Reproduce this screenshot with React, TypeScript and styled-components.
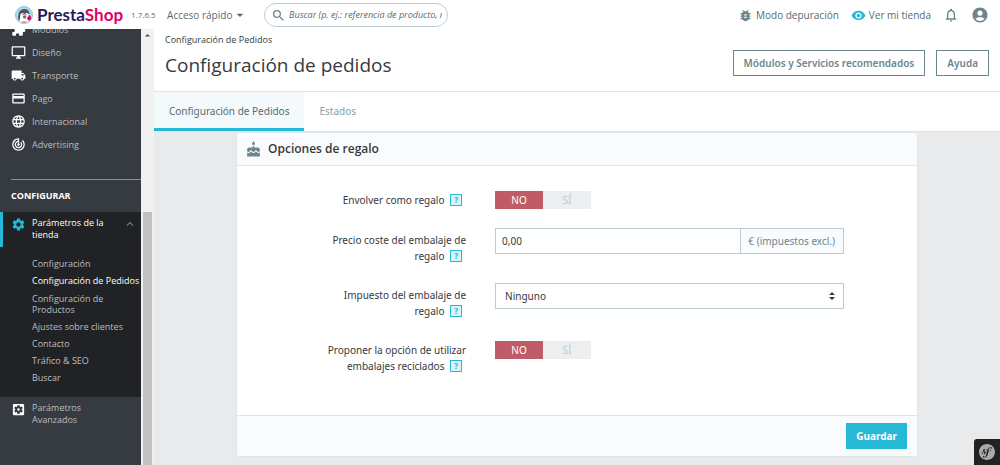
import React from "react";
import styled, { createGlobalStyle, css } from "styled-components";
import {
  MdAccountCircle,
  MdArrowDropDown,
  MdArrowDropUp,
  MdBugReport,
  MdCake,
  MdCreditCard,
  MdExtension,
  MdKeyboardArrowUp,
  MdLanguage,
  MdLocalShipping,
  MdNotificationsNone,
  MdOutlineDesktopWindows,
  MdSearch,
  MdSettings,
  MdSettingsApplications,
  MdTrackChanges,
  MdVisibility,
} from "react-icons/md";
import { SiSymfony } from "react-icons/si";

const cyan = "#25b9d7";
const slate = "#6c868e";
const ink = "#363a41";

const GlobalStyle = createGlobalStyle`
  *, *::before, *::after { box-sizing: border-box; }
  body {
    margin: 0;
    background: #e9eaec;
    color: ${ink};
    font-family: "Noto Sans", "Open Sans", sans-serif;
    font-size: 10px;
    line-height: 16px;
  }
  button, input, select { font: inherit; color: inherit; }
  a { color: inherit; text-decoration: none; }
  ul { list-style: none; margin: 0; padding: 0; }
  svg { flex: none; display: block; }
`;

const Shell = styled.div`
  display: flex;
  flex-direction: column;
  min-height: 100vh;
`;

const TopBar = styled.header`
  display: flex;
  align-items: center;
  height: 29px;
  padding: 1px 11px 0 14px;
  background: #fff;
  color: #576c72;
  font-family: "Open Sans", sans-serif;
  position: relative;
  z-index: 1;
`;

const Brand = styled.a`
  display: flex;
  align-items: center;
  gap: 3px;
  color: #251b5b;
  font-family: Lato, "Open Sans", sans-serif;
  font-size: 17px;
  font-weight: 700;
  line-height: 24px;

  em {
    color: #df0067;
    font-style: normal;
  }
`;

const Version = styled.span`
  width: 36px;
  margin-left: 8px;
  font-size: 8px;
`;

const QuickAccess = styled.button`
  display: flex;
  align-items: center;
  min-width: 97px;
  padding: 0;
  border: 0;
  background: none;
`;

const SearchBox = styled.label`
  display: flex;
  align-items: center;
  gap: 3px;
  width: 184px;
  height: 24px;
  padding: 0 5px 0 6px;
  border: 1px solid #bbcdd2;
  border-radius: 12px;

  input {
    flex: 1;
    min-width: 0;
    padding: 0;
    border: 0;
    outline: 0;
    background: none;
    font-size: 9px;
    font-style: italic;
  }
  input::placeholder { color: #576c72; opacity: 1; }
`;

const TopLinks = styled.nav`
  display: flex;
  align-items: center;
  gap: 12px;
  margin-left: auto;
`;

const TopLink = styled.a`
  display: flex;
  align-items: center;
  gap: 3px;
`;

const IconButton = styled.button`
  display: flex;
  padding: 0;
  border: 0;
  background: none;
  color: ${slate};
`;

const Columns = styled.div`
  display: flex;
  flex: 1;
`;

const Sidebar = styled.aside`
  display: flex;
  flex: none;
  width: 154px;
  overflow: hidden;
  background: #363a41;
  color: #bebebe;
  font-family: "Open Sans", sans-serif;
  font-size: 9px;
  line-height: 12px;
`;

const Menu = styled.nav`
  flex: 1;
  min-width: 0;
`;

const MenuGroup = styled.ul`
  margin-top: -11px;
`;

const menuRow = css`
  display: flex;
  gap: 6px;
  padding: 4px 0 4px 11px;

  svg { color: #fff; }
`;

const MenuLink = styled.a`
  ${menuRow}
  align-items: center;
`;

const MenuTitle = styled.h2`
  margin: 23px 0 0 11px;
  padding: 10px 0;
  border-top: 1px solid #8a8f98;
  color: #fff;
  font-size: 9px;
  font-weight: 700;
  line-height: 12px;
`;

const OpenSection = styled.div`
  background: #202226;
  padding-bottom: 14px;
`;

const OpenLink = styled.a`
  ${menuRow}
  padding: 5px 4px 6px 8px;
  border-left: 3px solid ${cyan};
  color: #fff;

  span { flex: 1; }
  svg:first-child { color: ${cyan}; }
  svg:last-child { color: ${slate}; }
`;

const SubMenu = styled.ul`
  display: flex;
  flex-direction: column;
  gap: 6px;
  padding: 11px 0 0 32px;
`;

const SubLink = styled.a<{ $active?: boolean }>`
  display: block;
  max-width: ${(p) => (p.$active ? "none" : "96px")};
  color: ${(p) => (p.$active ? "#fff" : "inherit")};
  line-height: ${(p) => (p.$active ? "12px" : "11px")};
  white-space: ${(p) => (p.$active ? "nowrap" : "normal")};
`;

const AdvancedLink = styled.a`
  ${menuRow}
  padding: 5px 48px 5px 11px;
`;

const ScrollTrack = styled.div`
  display: flex;
  flex-direction: column;
  align-items: center;
  justify-content: space-between;
  width: 13px;
  background: #f1f1f1;
  color: #505050;
`;

const ScrollThumb = styled.div`
  width: 9px;
  height: 58%;
  background: #c1c1c1;
`;

const Main = styled.main`
  flex: 1;
  min-width: 0;
`;

const PageHead = styled.div`
  background: #fff;
  border-bottom: 1px solid #dfe3e6;
`;

const TitleBlock = styled.div`
  display: flex;
  justify-content: space-between;
  align-items: flex-end;
  padding: 4px 11px 15px;
  border-bottom: 1px solid #e3e6e8;
`;

const Breadcrumb = styled.a`
  display: block;
  font-family: "Open Sans", sans-serif;
  font-size: 9px;
  line-height: 14px;
`;

const Title = styled.h1`
  margin: 7px 0 0;
  font-family: "Open Sans", sans-serif;
  font-size: 19px;
  font-weight: 400;
  line-height: 22px;
`;

const Actions = styled.div`
  display: flex;
  gap: 11px;
`;

const OutlineButton = styled.button`
  height: 26px;
  padding: 0 10px;
  border: 1px solid ${slate};
  background: #fff;
  color: ${slate};
  font-weight: 600;
`;

const Tabs = styled.nav`
  display: flex;
`;

const Tab = styled.a<{ $active?: boolean }>`
  height: 39px;
  padding: 11px 15px 0;
  border-bottom: 3px solid ${(p) => (p.$active ? cyan : "transparent")};
  background: ${(p) => (p.$active ? "#f4f9fb" : "transparent")};
  color: ${(p) => (p.$active ? "#576c72" : "#8a9ea4")};
`;

const Card = styled.form`
  margin: 0 82px 7px;
  border: 1px solid #dbe6e9;
  border-radius: 4px;
  background: #fff;
`;

const CardHead = styled.h2`
  display: flex;
  align-items: center;
  gap: 6px;
  height: 33px;
  margin: 0;
  padding: 0 8px;
  border-bottom: 1px solid #dbe6e9;
  border-radius: 4px 4px 0 0;
  background: #fafbfc;
  font-family: "Open Sans", sans-serif;
  font-size: 12px;
  font-weight: 600;

  svg { color: ${slate}; }
`;

const Fields = styled.div`
  display: flex;
  flex-direction: column;
  gap: 19px;
  padding: 22px 73px 41px 74px;
`;

const Field = styled.div`
  display: grid;
  grid-template-columns: 4fr 9fr;
  column-gap: 29px;
  align-items: start;
`;

const FieldLabel = styled.label`
  padding-top: 4px;
  text-align: right;
`;

const Help = styled.span`
  display: inline-block;
  width: 12px;
  height: 12px;
  margin: 0 4px 0 3px;
  border: 1px solid ${cyan};
  background: #d8f4f9;
  color: ${cyan};
  font-size: 8px;
  font-weight: 700;
  line-height: 10px;
  text-align: center;
  vertical-align: 1px;
`;

const Toggle = styled.div`
  display: flex;
  width: 96px;
  height: 18px;
  margin-top: 3px;
`;

const ToggleOption = styled.label<{ $on?: boolean }>`
  flex: 1;
  background: ${(p) => (p.$on ? "#c05c67" : "#eceeef")};
  color: ${(p) => (p.$on ? "#fff" : "#bbcdd2")};
  line-height: 18px;
  text-align: center;

  input {
    position: absolute;
    opacity: 0;
    pointer-events: none;
  }
`;

const InputGroup = styled.div`
  display: flex;
  height: 26px;
  border: 1px solid #bbcdd2;

  input {
    flex: 1;
    min-width: 0;
    padding: 0 6px;
    border: 0;
    outline: 0;
  }
  span {
    padding: 4px 8px 4px 7px;
    border-left: 1px solid #bbcdd2;
    background: #fafbfc;
    color: ${slate};
  }
`;

const SelectBox = styled.div`
  display: grid;
  align-items: center;

  > * { grid-area: 1 / 1; }
  select {
    width: 100%;
    height: 26px;
    padding: 0 9px;
    border: 1px solid #bbcdd2;
    border-radius: 0;
    outline: 0;
    background: #fff;
    appearance: none;
  }
  svg {
    justify-self: end;
    margin-right: 9px;
    pointer-events: none;
  }
`;

const CardFoot = styled.div`
  display: flex;
  justify-content: flex-end;
  padding: 7px 10px;
  border-top: 1px solid #dbe6e9;
  border-radius: 0 0 4px 4px;
  background: #fafbfc;
`;

const SaveButton = styled.button`
  height: 26px;
  padding: 0 10px;
  border: 0;
  background: ${cyan};
  color: #fff;
  font-weight: 700;
`;

const DebugButton = styled.button`
  position: fixed;
  right: 0;
  bottom: 0;
  display: flex;
  align-items: center;
  justify-content: center;
  width: 26px;
  height: 26px;
  padding: 0;
  border: 0;
  border-radius: 3px 0 0 0;
  background: #222;
  color: #aaa;
`;

const Mascot = () => (
  <svg width="20" height="20" viewBox="0 0 40 40" aria-hidden="true">
    <circle cx="20" cy="20" r="17" fill="#a8dcea" stroke="#8fc6d6" strokeWidth="2" />
    <path d="M10 32c-1-6 0-12 3-15l14 1c3 5 4 10 2 14-5 6-14 6-19 0z" fill="#fff" />
    <path d="M9 20c0-7 5-12 12-12 6 0 10 4 10 10l-4-1-7 2-6-2-3 5z" fill="#57545c" />
    <path d="M9 20c-2 4-1 9 2 12 1-4 1-8 2-13z" fill="#57545c" />
    <circle cx="17" cy="19" r="3" fill="#fff" />
    <circle cx="25" cy="19" r="3" fill="#fff" />
    <circle cx="18" cy="19" r="1" fill="#222" />
    <circle cx="24" cy="19" r="1" fill="#222" />
    <path d="M18 22c2-2 5-2 7 0l-2 6-5-2z" fill="#8d6a5a" />
    <path d="M13 34c4-3 10-3 14 0-4 3-10 3-14 0z" fill="#c9a58f" />
    <path d="M26 26l5-6c3 2 4 6 3 9l-6 2z" fill="#df0067" />
  </svg>
);

const SelectArrows = () => (
  <svg width="6" height="8" viewBox="0 0 6 8" aria-hidden="true">
    <path d="M3 0l3 3H0zM3 8l3-3H0z" fill="#363a41" />
  </svg>
);

const menu = [
  { icon: MdExtension, text: "Módulos" },
  { icon: MdOutlineDesktopWindows, text: "Diseño" },
  { icon: MdLocalShipping, text: "Transporte" },
  { icon: MdCreditCard, text: "Pago" },
  { icon: MdLanguage, text: "Internacional" },
  { icon: MdTrackChanges, text: "Advertising" },
];

const subMenu = [
  "Configuración",
  "Configuración de Pedidos",
  "Configuración de Productos",
  "Ajustes sobre clientes",
  "Contacto",
  "Tráfico & SEO",
  "Buscar",
];

function YesNo({ id }: { id: string }) {
  return (
    <Toggle role="radiogroup" aria-labelledby={`${id}-label`}>
      <ToggleOption $on>
        <input type="radio" name={id} id={id} defaultChecked />
        NO
      </ToggleOption>
      <ToggleOption>
        <input type="radio" name={id} />
        SÍ
      </ToggleOption>
    </Toggle>
  );
}

function FormRow({ id, text, children }: { id: string; text: string; children: React.ReactNode }) {
  return (
    <Field>
      <FieldLabel htmlFor={id} id={`${id}-label`}>
        {text}&nbsp;<Help>?</Help>
      </FieldLabel>
      {children}
    </Field>
  );
}

export default function App() {
  return (
    <Shell>
      <GlobalStyle />
      <TopBar>
        <Brand href="#">
          <Mascot />
          <span>
            Presta<em>Shop</em>
          </span>
        </Brand>
        <Version>1.7.6.5</Version>
        <QuickAccess type="button">
          Acceso rápido
          <MdArrowDropDown size={16} />
        </QuickAccess>
        <SearchBox>
          <MdSearch size={15} color={slate} />
          <input
            type="text"
            aria-label="Buscar"
            placeholder="Buscar (p. ej.: referencia de producto, nombre del cliente...)"
          />
        </SearchBox>
        <TopLinks>
          <TopLink href="#">
            <MdBugReport size={15} color={slate} />
            Modo depuración
          </TopLink>
          <TopLink href="#">
            <MdVisibility size={15} color={cyan} />
            Ver mi tienda
          </TopLink>
          <IconButton type="button" aria-label="Notificaciones">
            <MdNotificationsNone size={16} />
          </IconButton>
          <IconButton type="button" aria-label="Cuenta">
            <MdAccountCircle size={18} />
          </IconButton>
        </TopLinks>
      </TopBar>

      <Columns>
        <Sidebar>
          <Menu>
            <MenuGroup>
              {menu.map(({ icon: Icon, text }) => (
                <li key={text}>
                  <MenuLink href="#">
                    <Icon size={15} />
                    {text}
                  </MenuLink>
                </li>
              ))}
            </MenuGroup>
            <MenuTitle>CONFIGURAR</MenuTitle>
            <OpenSection>
              <OpenLink href="#">
                <MdSettings size={15} />
                <span>Parámetros de la tienda</span>
                <MdKeyboardArrowUp size={14} />
              </OpenLink>
              <SubMenu>
                {subMenu.map((text) => (
                  <li key={text}>
                    <SubLink href="#" $active={text === "Configuración de Pedidos"}>
                      {text}
                    </SubLink>
                  </li>
                ))}
              </SubMenu>
            </OpenSection>
            <AdvancedLink href="#">
              <MdSettingsApplications size={15} />
              Parámetros Avanzados
            </AdvancedLink>
          </Menu>
          <ScrollTrack>
            <MdArrowDropUp size={13} />
            <ScrollThumb />
          </ScrollTrack>
        </Sidebar>

        <Main>
          <PageHead>
            <TitleBlock>
              <div>
                <Breadcrumb href="#">Configuración de Pedidos</Breadcrumb>
                <Title>Configuración de pedidos</Title>
              </div>
              <Actions>
                <OutlineButton type="button">Módulos y Servicios recomendados</OutlineButton>
                <OutlineButton type="button">Ayuda</OutlineButton>
              </Actions>
            </TitleBlock>
            <Tabs>
              <Tab href="#" $active>
                Configuración de Pedidos
              </Tab>
              <Tab href="#">Estados</Tab>
            </Tabs>
          </PageHead>

          <Card>
            <CardHead>
              <MdCake size={17} />
              Opciones de regalo
            </CardHead>
            <Fields>
              <FormRow id="wrap" text="Envolver como regalo">
                <YesNo id="wrap" />
              </FormRow>
              <FormRow id="price" text="Precio coste del embalaje de regalo">
                <InputGroup>
                  <input id="price" type="text" defaultValue="0,00" />
                  <span>€ (impuestos excl.)</span>
                </InputGroup>
              </FormRow>
              <FormRow id="tax" text="Impuesto del embalaje de regalo">
                <SelectBox>
                  <select id="tax">
                    <option>Ninguno</option>
                  </select>
                  <SelectArrows />
                </SelectBox>
              </FormRow>
              <FormRow id="recycled" text="Proponer la opción de utilizar embalajes reciclados">
                <YesNo id="recycled" />
              </FormRow>
            </Fields>
            <CardFoot>
              <SaveButton type="submit">Guardar</SaveButton>
            </CardFoot>
          </Card>
        </Main>
      </Columns>

      <DebugButton type="button" aria-label="Symfony">
        <SiSymfony size={16} />
      </DebugButton>
    </Shell>
  );
}
